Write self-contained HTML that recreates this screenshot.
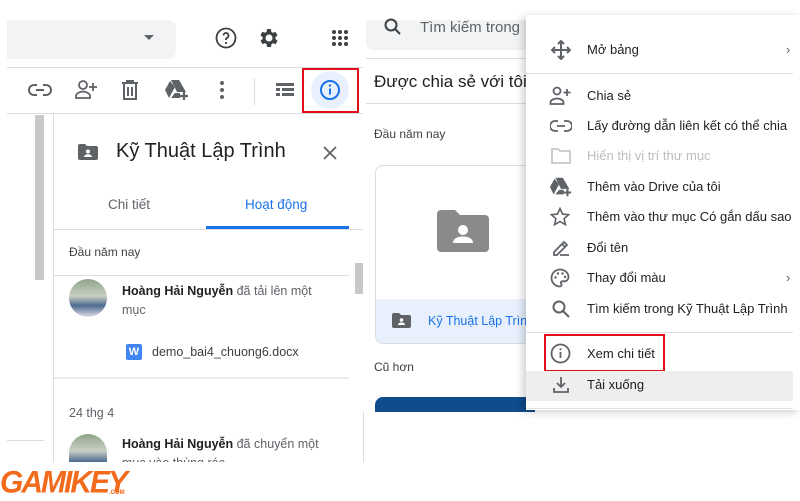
<!DOCTYPE html>
<html><head><meta charset="utf-8"><style>
*{margin:0;padding:0;box-sizing:border-box}
body{width:800px;height:500px;overflow:hidden;background:#fff;font-family:"Liberation Sans",Arial,sans-serif;color:#202124;position:relative}
.a{position:absolute;white-space:nowrap}
svg{position:absolute}
.mi{position:absolute;left:587px;font-size:13px;color:#202124}
.ic{fill:none;stroke:#5f6368;stroke-width:1.8}
</style></head><body>
<!-- top search left -->
<div class="a" style="left:7px;top:20px;width:169px;height:39px;background:#f1f3f4;border-radius:0 8px 8px 0"></div>
<svg style="left:143px;top:34px" width="12" height="8"><path d="M1 1h10L6 6z" fill="#5f6368"/></svg>
<svg style="left:214px;top:26px" width="24" height="24" viewBox="0 0 24 24"><circle cx="12" cy="12" r="9.5" class="ic" style="stroke:#3c4043"/><path d="M9.5 9.5a2.5 2.5 0 1 1 3.5 2.3c-.7.4-1 .9-1 1.7v.5" class="ic" style="stroke:#3c4043"/><circle cx="12" cy="17" r="1.1" fill="#3c4043"/></svg>
<svg style="left:257px;top:26px" width="24" height="24" viewBox="0 0 24 24"><path fill="#3c4043" d="M19.4 13a7.5 7.5 0 0 0 0-2l2.1-1.6-2-3.5-2.5 1a7 7 0 0 0-1.7-1L15 3h-4l-.4 2.7a7 7 0 0 0-1.7 1l-2.5-1-2 3.5L6.6 11a7.5 7.5 0 0 0 0 2l-2.1 1.6 2 3.5 2.5-1a7 7 0 0 0 1.7 1L11 21h4l.4-2.7a7 7 0 0 0 1.7-1l2.5 1 2-3.5zM13 15.5a3.5 3.5 0 1 1 0-7 3.5 3.5 0 0 1 0 7z" transform="translate(-1 0)"/><circle cx="12" cy="12" r="2" fill="#fff"/></svg>
<svg style="left:331px;top:29px" width="18" height="18"><g fill="#3c4043"><circle cx="3" cy="3" r="2"/><circle cx="9" cy="3" r="2"/><circle cx="15" cy="3" r="2"/><circle cx="3" cy="9" r="2"/><circle cx="9" cy="9" r="2"/><circle cx="15" cy="9" r="2"/><circle cx="3" cy="15" r="2"/><circle cx="9" cy="15" r="2"/><circle cx="15" cy="15" r="2"/></g></svg>
<!-- right search -->
<div class="a" style="left:366px;top:20px;width:170px;height:30px;background:#f1f3f4;border-radius:0 0 0 8px"></div>
<svg style="left:383px;top:17px" width="20" height="20" viewBox="0 0 20 20"><circle cx="8" cy="8" r="5.5" class="ic" style="stroke:#3c4043;stroke-width:2"/><path d="M12 12l5 5" stroke="#3c4043" stroke-width="2"/></svg>
<div class="a" style="left:420px;top:19px;font-size:15px;color:#5f6368">Tìm kiếm trong</div>
<!-- toolbar -->
<div class="a" style="left:7px;top:67px;width:356px;height:1px;background:#dadce0"></div>
<div class="a" style="left:366px;top:58px;width:170px;height:1px;background:#dadce0"></div>
<div class="a" style="left:7px;top:113px;width:356px;height:1px;background:#dadce0"></div>
<svg style="left:28px;top:80px" width="24" height="20" viewBox="0 0 24 20"><path d="M9 5H6a5 5 0 0 0 0 10h3M15 5h3a5 5 0 0 1 0 10h-3M8 10h8" class="ic" style="stroke-width:2"/></svg>
<svg style="left:74px;top:79px" width="24" height="22" viewBox="0 0 24 22"><circle cx="9" cy="6" r="4" class="ic"/><path d="M2 19v-2c0-3 5-4.5 7-4.5s7 1.5 7 4.5v2z" class="ic"/><path d="M19 4v8M15 8h8" class="ic"/></svg>
<svg style="left:121px;top:80px" width="18" height="20" viewBox="0 0 18 20"><path d="M1 3h16M6 3V1h6v2M3 3v16h12V3M7 7v9M11 7v9" class="ic" style="stroke-width:2"/></svg>
<svg style="left:164px;top:79px" width="26" height="22" viewBox="0 0 26 22"><path d="M7 1h8l7 12h-9z M6 2l-5 9 4 8 6-11z" fill="#5f6368"/><path d="M7 19h9v-5h-5z" fill="#5f6368"/><path d="M20 13v8M16 17h8" stroke="#5f6368" stroke-width="2.2"/></svg>
<svg style="left:218px;top:80px" width="8" height="20"><circle cx="4" cy="3" r="2" fill="#5f6368"/><circle cx="4" cy="10" r="2" fill="#5f6368"/><circle cx="4" cy="17" r="2" fill="#5f6368"/></svg>
<div class="a" style="left:254px;top:78px;width:1px;height:27px;background:#dadce0"></div>
<svg style="left:276px;top:83px" width="18" height="14"><g fill="#5f6368"><rect x="0" y="0" width="18" height="3"/><rect x="0" y="5" width="4" height="3"/><rect x="6" y="5" width="12" height="3"/><rect x="0" y="10" width="4" height="3"/><rect x="6" y="10" width="12" height="3"/><rect x="0" y="0" width="4" height="3"/></g></svg>
<div class="a" style="left:311px;top:71px;width:38px;height:38px;border-radius:50%;background:#e8f0fe"></div>
<svg style="left:319px;top:79px" width="22" height="22" viewBox="0 0 22 22"><circle cx="11" cy="11" r="9" fill="none" stroke="#1a73e8" stroke-width="2"/><path d="M11 9.5v6" stroke="#1a73e8" stroke-width="2"/><circle cx="11" cy="6.5" r="1.2" fill="#1a73e8"/></svg>
<div class="a" style="left:302px;top:68px;width:57px;height:45px;border:2px solid #e0101a"></div>
<!-- left side -->
<div class="a" style="left:35px;top:115px;width:9px;height:165px;background:#c8c8c8"></div>
<div class="a" style="left:7px;top:440px;width:37px;height:1px;background:#dadce0"></div>
<div class="a" style="left:53px;top:113px;width:1px;height:349px;background:#dadce0"></div>
<!-- details panel -->
<svg style="left:78px;top:144px" width="20" height="16"><path d="M0 2a2 2 0 0 1 2-2h5l2 2h9a2 2 0 0 1 2 2v10a2 2 0 0 1-2 2H2a2 2 0 0 1-2-2z" fill="#5f6368"/><circle cx="10" cy="7.5" r="2" fill="#fff"/><path d="M6 13c0-2 2.5-2.8 4-2.8s4 .8 4 2.8z" fill="#fff"/></svg>
<div class="a" style="left:116px;top:140px;font-size:20px;color:#202124">Kỹ Thuật Lập Trình</div>
<svg style="left:322px;top:145px" width="16" height="16"><path d="M2 2l12 12M14 2L2 14" stroke="#5f6368" stroke-width="1.8"/></svg>
<div class="a" style="left:108px;top:197px;font-size:13.5px;color:#5f6368">Chi tiết</div>
<div class="a" style="left:245px;top:197px;font-size:13.5px;color:#1a73e8">Hoạt động</div>
<div class="a" style="left:206px;top:226px;width:143px;height:3px;background:#1a73e8"></div>
<div class="a" style="left:54px;top:229px;width:309px;height:1px;background:#dadce0"></div>
<div class="a" style="left:69px;top:245px;font-size:12px;color:#3c4043">Đầu năm nay</div>
<div class="a" style="left:54px;top:275px;width:295px;height:1px;background:#dadce0"></div>
<div class="a" style="left:355px;top:263px;width:8px;height:31px;background:#c8c8c8"></div>
<div class="a" style="left:69px;top:279px;width:38px;height:38px;border-radius:50%;background:linear-gradient(#8fa58a,#c9cfc4 45%,#4d6a8e 70%,#dfe2e6)"></div>
<div class="a" style="left:122px;top:284px;font-size:12.5px;color:#3c4043"><b style="font-weight:bold;color:#202124">Hoàng Hải Nguyễn</b> <span style="color:#5f6368">đã tải lên một</span></div>
<div class="a" style="left:122px;top:303px;font-size:12.5px;color:#5f6368">mục</div>
<div class="a" style="left:126px;top:344px;width:16px;height:16px;background:#4285f4;border-radius:2px;color:#fff;font-size:11px;font-weight:bold;text-align:center;line-height:16px">W</div>
<div class="a" style="left:152px;top:345px;font-size:12.5px;color:#3c4043">demo_bai4_chuong6.docx</div>
<div class="a" style="left:54px;top:377px;width:295px;height:2px;background:#e8eaed"></div>
<div class="a" style="left:69px;top:406px;font-size:12.5px;color:#5f6368">24 thg 4</div>
<div class="a" style="left:69px;top:434px;width:38px;height:28px;border-radius:19px 19px 0 0;background:linear-gradient(#8fa58a,#c9cfc4 60%,#4d6a8e)"></div>
<div class="a" style="left:122px;top:437px;font-size:12.5px"><b style="color:#202124">Hoàng Hải Nguyễn</b> <span style="color:#5f6368">đã chuyển một</span></div>
<div class="a" style="left:122px;top:456px;font-size:12.5px;color:#5f6368;height:6px;overflow:hidden">mục vào thùng rác</div>
<div class="a" style="left:363px;top:412px;width:1px;height:50px;background:#dadce0"></div>
<!-- middle -->
<div class="a" style="left:374px;top:72px;font-size:17px;color:#202124">Được chia sẻ với tôi</div>
<div class="a" style="left:366px;top:103px;width:170px;height:1px;background:#dadce0"></div>
<div class="a" style="left:374px;top:127px;font-size:12px;color:#3c4043">Đầu năm nay</div>
<div class="a" style="left:375px;top:165px;width:170px;height:179px;border:1px solid #dadce0;border-radius:8px;overflow:hidden"><div class="a" style="left:0;top:133px;width:170px;height:46px;background:#e8f0fe"></div></div>
<svg style="left:437px;top:210px" width="52" height="42"><path d="M0 4a4 4 0 0 1 4-4h14l5 5h25a4 4 0 0 1 4 4v29a4 4 0 0 1-4 4H4a4 4 0 0 1-4-4z" fill="#8a8a8a"/><circle cx="26" cy="20" r="5" fill="#fff"/><path d="M16 33c0-5 6-6.5 10-6.5s10 1.5 10 6.5z" fill="#fff"/></svg>
<svg style="left:392px;top:313px" width="19" height="15"><path d="M0 2a2 2 0 0 1 2-2h5l2 2h8a2 2 0 0 1 2 2v9a2 2 0 0 1-2 2H2a2 2 0 0 1-2-2z" fill="#5f6368"/><circle cx="9.5" cy="7" r="1.8" fill="#fff"/><path d="M6 12c0-2 2-2.5 3.5-2.5S13 10 13 12z" fill="#fff"/></svg>
<div class="a" style="left:428px;top:314px;font-size:12.5px;color:#1a73e8">Kỹ Thuật Lập Trìn</div>
<div class="a" style="left:374px;top:360px;font-size:12px;color:#3c4043">Cũ hơn</div>
<div class="a" style="left:375px;top:397px;width:160px;height:15px;background:#0f4c8c;border-radius:8px 8px 0 0"></div>
<!-- menu -->
<div class="a" style="left:526px;top:15px;width:274px;height:395px;background:#fff;box-shadow:-3px 2px 8px rgba(0,0,0,.2)"></div>
<svg style="left:551px;top:40px" width="20" height="20" viewBox="0 0 20 20"><path d="M10 1v18M1 10h18M7 4l3-3 3 3M7 16l3 3 3-3M4 7l-3 3 3 3M16 7l3 3-3 3" fill="none" stroke="#5f6368" stroke-width="2"/></svg>
<div class="mi" style="top:42px">Mở bảng</div>
<div class="a" style="left:786px;top:42px;font-size:13px;color:#5f6368">›</div>
<div class="a" style="left:526px;top:73px;width:267px;height:1px;background:#e0e0e0"></div>
<svg style="left:549px;top:86px" width="24" height="20" viewBox="0 0 24 20"><circle cx="8" cy="5" r="3.5" class="ic"/><path d="M1.5 18v-1.5c0-3 4.5-4 6.5-4s6.5 1 6.5 4V18z" class="ic"/><path d="M18 3v7M14.5 6.5h7" class="ic"/></svg>
<div class="mi" style="top:88px">Chia sẻ</div>
<svg style="left:550px;top:119px" width="22" height="14" viewBox="0 0 22 14"><path d="M8 2H5a5 5 0 0 0 0 10h3M14 2h3a5 5 0 0 1 0 10h-3M7 7h8" class="ic"/></svg>
<div class="mi" style="top:118px">Lấy đường dẫn liên kết có thể chia</div>
<svg style="left:551px;top:148px" width="20" height="16"><path d="M1 1h6l2 2h10v12H1z" fill="none" stroke="#c8c8c8" stroke-width="1.8"/></svg>
<div class="mi" style="top:148px;color:#bdbdbd">Hiển thị vị trí thư mục</div>
<svg style="left:549px;top:176px" width="24" height="22" viewBox="0 0 26 22"><path d="M7 1h8l7 12h-9z M6 2l-5 9 4 8 6-11z" fill="#5f6368"/><path d="M7 19h9v-5h-5z" fill="#5f6368"/><path d="M20 13v8M16 17h8" stroke="#5f6368" stroke-width="2.2"/></svg>
<div class="mi" style="top:179px">Thêm vào Drive của tôi</div>
<svg style="left:550px;top:207px" width="20" height="20" viewBox="0 0 20 20"><path d="M10 1.5l2.6 5.6 6 .6-4.5 4 1.3 6L10 14.6l-5.4 3.1 1.3-6-4.5-4 6-.6z" class="ic" style="stroke-width:1.6"/></svg>
<div class="mi" style="top:209px">Thêm vào thư mục Có gắn dấu sao</div>
<svg style="left:551px;top:238px" width="20" height="20" viewBox="0 0 20 20"><path d="M3 17v-3l10-10 3 3-10 10zM11 6l3 3M9 17h9" class="ic"/></svg>
<div class="mi" style="top:240px">Đổi tên</div>
<svg style="left:550px;top:268px" width="20" height="20" viewBox="0 0 20 20"><path d="M10 1.5a8.5 8.5 0 0 0 0 17c1 0 1.6-.7 1.6-1.5 0-1-.8-1.3-.8-2.2 0-.9.7-1.5 1.6-1.5h2a4.2 4.2 0 0 0 4.1-4.3C18.5 5 14.7 1.5 10 1.5z" class="ic"/><circle cx="5.5" cy="9.5" r="1.2" fill="#5f6368"/><circle cx="8" cy="5.5" r="1.2" fill="#5f6368"/><circle cx="12.5" cy="5.5" r="1.2" fill="#5f6368"/><circle cx="15" cy="9" r="1.2" fill="#5f6368"/></svg>
<div class="mi" style="top:270px">Thay đổi màu</div>
<div class="a" style="left:786px;top:270px;font-size:13px;color:#5f6368">›</div>
<svg style="left:551px;top:299px" width="20" height="20" viewBox="0 0 20 20"><circle cx="8" cy="8" r="5.5" class="ic" style="stroke-width:2"/><path d="M12 12l6 6" stroke="#5f6368" stroke-width="2"/></svg>
<div class="mi" style="top:301px">Tìm kiếm trong Kỹ Thuật Lập Trình</div>
<div class="a" style="left:526px;top:332px;width:267px;height:1px;background:#e0e0e0"></div>
<svg style="left:550px;top:343px" width="21" height="21" viewBox="0 0 21 21"><circle cx="10.5" cy="10.5" r="9" class="ic"/><path d="M10.5 9v6" stroke="#5f6368" stroke-width="1.8"/><circle cx="10.5" cy="6.3" r="1.1" fill="#5f6368"/></svg>
<div class="mi" style="top:346px">Xem chi tiết</div>
<div class="a" style="left:544px;top:334px;width:121px;height:38px;border:2px solid #e0101a"></div>
<div class="a" style="left:526px;top:371px;width:267px;height:30px;background:#eeeeee"></div>
<svg style="left:552px;top:376px" width="18" height="18" viewBox="0 0 18 18"><path d="M9 1v10M5 7l4 4 4-4M2 12v4h14v-4" class="ic"/></svg>
<div class="mi" style="top:377px">Tải xuống</div>
<div class="a" style="left:526px;top:408px;width:267px;height:1px;background:#e0e0e0"></div>
<!-- logo -->
<div class="a" style="left:0;top:466px;font-size:30px;font-weight:bold;font-style:italic;color:#f26a1b;letter-spacing:-2px;font-family:'Liberation Sans',sans-serif;transform:scaleY(1.05)">GAMIKEY</div>
<div class="a" style="left:109px;top:490px;font-size:6px;font-weight:bold;color:#f26a1b">.COM</div>
</body></html>
